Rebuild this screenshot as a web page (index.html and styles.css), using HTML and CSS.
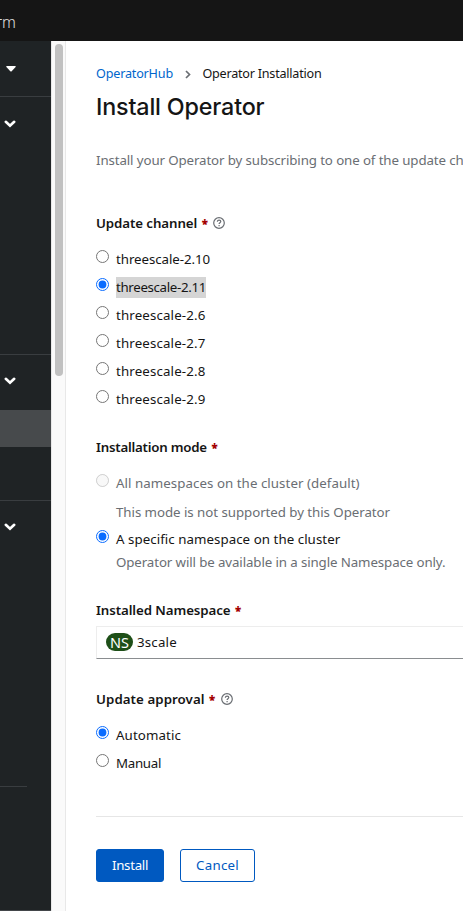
FILE: index.html
```html
<!DOCTYPE html>
<html lang="en">
<head>
<meta charset="utf-8">
<title>Install Operator</title>
<link rel="stylesheet" href="styles.css">
</head>
<body>
<header class="masthead">rm</header>
<div class="page">
  <nav class="sidebar">
    <div class="nav-block perspective"><svg class="caret" viewBox="0 0 10 6"><path d="M.8 0h8.4q.9.2.4 1L5.7 5.2q-.7.6-1.4 0L.4 1Q-.1.2.8 0z"/></svg></div>
    <div class="nav-block nav-first"><svg class="chevron" viewBox="0 0 12 8"><path d="M1.8 1.8 6 5.8l4.2-4"/></svg></div>
    <div class="nav-block nav-operators"><svg class="chevron" viewBox="0 0 12 8"><path d="M1.8 1.8 6 5.8l4.2-4"/></svg><div class="nav-current"></div></div>
    <div class="nav-block nav-last"><svg class="chevron" viewBox="0 0 12 8"><path d="M1.8 1.8 6 5.8l4.2-4"/></svg><div class="nav-divider"></div></div>
  </nav>
  <div class="scroll-track"><div class="scroll-thumb"></div></div>
  <main class="content">
    <div class="breadcrumb">
      <a class="crumb-link">OperatorHub</a>
      <svg class="crumb-sep" viewBox="0 0 6 9"><path d="m1 1 3.5 3.5L1 8"/></svg>
      <span class="crumb-current">Operator Installation</span>
    </div>
    <h1 class="title">Install Operator</h1>
    <p class="description">Install your Operator by subscribing to one of the update channels to keep the Operator up to date.</p>

    <section class="group channel">
      <h2 class="label label-channel"><span>Update channel</span><b class="required">*</b><svg class="help" viewBox="0 0 12 12"><circle cx="6" cy="6" r="5.3"/><path d="M4.3 4.8c.1-1.1.8-1.6 1.8-1.6 1 0 1.7.6 1.7 1.4 0 1.2-1.7 1.2-1.7 2.5"/><path d="M6.1 8.1v1.2"/></svg></h2>
      <label class="option"><input type="radio" name="channel"><span>threescale-2.10</span></label>
      <label class="option"><input type="radio" name="channel" checked><span class="selected">threescale-2.11</span></label>
      <label class="option"><input type="radio" name="channel"><span class="single">threescale-2.6</span></label>
      <label class="option"><input type="radio" name="channel"><span class="single">threescale-2.7</span></label>
      <label class="option"><input type="radio" name="channel"><span class="single">threescale-2.8</span></label>
      <label class="option"><input type="radio" name="channel"><span class="single">threescale-2.9</span></label>
    </section>

    <section class="group mode">
      <h2 class="label label-mode"><span>Installation mode</span><b class="required">*</b></h2>
      <label class="option disabled"><input type="radio" name="mode" disabled><span class="all">All namespaces on the cluster (default)</span></label>
      <p class="hint unsupported">This mode is not supported by this Operator</p>
      <label class="option"><input type="radio" name="mode" checked><span class="specific">A specific namespace on the cluster</span></label>
      <p class="hint availability">Operator will be available in a single Namespace only.</p>
    </section>

    <section class="group namespace">
      <h2 class="label label-namespace"><span>Installed Namespace</span><b class="required">*</b></h2>
      <div class="select"><span class="badge">NS</span><span class="select-text">3scale</span></div>
    </section>

    <section class="group approval">
      <h2 class="label label-approval"><span>Update approval</span><b class="required">*</b><svg class="help" viewBox="0 0 12 12"><circle cx="6" cy="6" r="5.3"/><path d="M4.3 4.8c.1-1.1.8-1.6 1.8-1.6 1 0 1.7.6 1.7 1.4 0 1.2-1.7 1.2-1.7 2.5"/><path d="M6.1 8.1v1.2"/></svg></h2>
      <label class="option"><input type="radio" name="approval" checked><span class="automatic">Automatic</span></label>
      <label class="option"><input type="radio" name="approval"><span class="manual">Manual</span></label>
    </section>

    <div class="actions">
      <button class="button primary">Install</button>
      <button class="button secondary">Cancel</button>
    </div>
  </main>
</div>
</body>
</html>
```
FILE: styles.css
```css
* { box-sizing: border-box; }
body {
  margin: 0;
  height: 911px;
  overflow: hidden;
  background: #fff;
  color: #151515;
  font: 13.3px/20px "Noto Sans", sans-serif;
  white-space: nowrap;
}
h1, h2, p { margin: 0; }
.masthead {
  height: 41px;
  padding-top: 12px;
  background: #151515;
  color: #e0e0e0;
  font-size: 15.5px;
  font-weight: 300;
  text-indent: -4px;
}
.page { display: flex; height: 870px; }

.sidebar { width: 51px; flex: none; background: #1f2325; border-bottom: 1px solid #43464a; }
.nav-block { border-bottom: 1px solid #393d40; }
.perspective { height: 56px; padding: 25px 0 0 6px; }
.nav-first { height: 258px; padding: 23px 0 0 4px; }
.nav-operators { height: 146px; padding-top: 22px; }
.nav-last { border: 0; padding-top: 22px; }
.nav-operators .chevron, .nav-last .chevron { margin-left: 4px; }
.caret { display: block; width: 10px; height: 6px; fill: #fff; }
.chevron {
  display: block;
  width: 12px;
  height: 8px;
  fill: none;
  stroke: #fff;
  stroke-width: 2.6;
  stroke-linecap: round;
}
.nav-current { height: 37px; margin-top: 25px; background: #474a4c; }
.nav-divider { width: 27px; height: 1px; margin-top: 255px; background: #393d40; }

.scroll-track {
  width: 15px;
  flex: none;
  padding: 3px 2px 0 3px;
  background: #fafafa;
  border-left: 1px solid #e8e8e8;
  border-right: 1px solid #e8e8e8;
}
.scroll-thumb { width: 8px; height: 332px; border-radius: 4px; background: #c1c1c1; }

.content { flex: 1; min-width: 0; padding: 23px 0 0 30px; overflow: hidden; }
.breadcrumb { display: flex; align-items: center; height: 20px; font-size: 12.6px; }
.crumb-link { width: 77px; color: #06c; letter-spacing: -.18px; }
.crumb-sep { width: 6px; height: 9px; margin: 0 12px 0 11.5px; fill: none; stroke: #6a6e73; stroke-width: 1.7; }
.crumb-current { letter-spacing: -.23px; }
.title {
  margin-top: 6px;
  font: 500 23.3px/34px Inter, sans-serif;
  letter-spacing: -.16px;
}
.description { margin-top: 26px; color: #6a6e73; letter-spacing: -.11px; }

.label { display: flex; align-items: center; height: 20px; margin-bottom: 12px; font-size: 13.3px; font-weight: 600; }
.label-channel { letter-spacing: -.09px; }
.label-mode { letter-spacing: -.23px; }
.label-namespace { letter-spacing: -.09px; }
.label-approval { letter-spacing: .06px; }
.required { width: 7px; margin: 1px 0 0 4.5px; color: #a30000; font-size: 11.5px; letter-spacing: 0; }
.help { width: 12px; height: 12px; margin-left: 4.5px; fill: none; stroke: #6a6e73; stroke-width: 1.2; }

.channel { margin-top: 43px; }
.option { display: flex; height: 28px; padding-top: 4px; letter-spacing: -.07px; }
.option input { flex: none; width: 13px; height: 13px; margin: 1px 7px 0 0; accent-color: #0a6cff; }
.option span { height: 21px; }
.option .selected { width: 90px; background: #d5d5d5; letter-spacing: -.34px; }
.option .single { letter-spacing: .14px; }
.mode { margin-top: 24px; }
.disabled { color: #6a6e73; }
.option .all { letter-spacing: .05px; }
.option .specific { letter-spacing: .05px; }
.hint { padding-left: 20px; color: #6a6e73; }
.unsupported { margin: 5px 0 3px; letter-spacing: -.05px; }
.availability { margin-top: -1px; letter-spacing: -.11px; }

.namespace { margin-top: 28px; }
.namespace .label { margin-bottom: 6px; }
.select {
  display: flex;
  align-items: center;
  height: 33px;
  padding: 0 0 2px 9px;
  border: 1px solid #ededed;
  border-right: 0;
  border-bottom-color: #8a8d90;
}
.badge {
  width: 27px;
  height: 18px;
  margin-right: 4px;
  border-radius: 9px;
  background: #1e4f18;
  color: #fff;
  font-size: 14.5px;
  line-height: 18px;
  text-align: center;
}
.select-text { letter-spacing: .2px; }
.approval { margin-top: 30px; }
.option .automatic { letter-spacing: .1px; }
.option .manual { letter-spacing: -.3px; }

.actions { display: flex; gap: 16px; margin-top: 39px; padding-top: 32px; border-top: 1px solid #e6e6e6; }
.button { height: 33px; padding: 0 0 2px; border: 1px solid #0059c0; border-radius: 3px; font: 13.3px/20px "Noto Sans", sans-serif; }
.primary { width: 68px; background: #0059c0; color: #fff; letter-spacing: -.3px; }
.secondary { width: 75px; background: #fff; color: #0059c0; letter-spacing: .25px; }
```
